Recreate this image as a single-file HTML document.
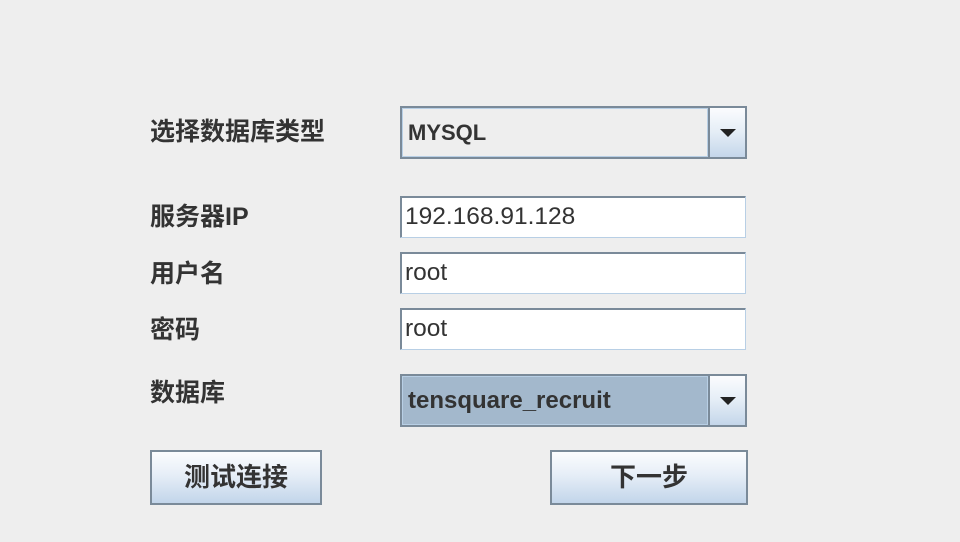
<!DOCTYPE html>
<html><head><meta charset="utf-8"><style>
body{margin:0;width:960px;height:542px;background:#eeeeee;position:relative;overflow:hidden;font-family:"Liberation Sans","Noto Sans CJK SC",sans-serif;}
.l{position:absolute;left:150px;font-size:25px;font-weight:bold;color:#333;line-height:28px;}
.tf{position:absolute;left:400px;background:#fff;border:1px solid #7a8a99;border-right-color:#b8cfe5;border-bottom-color:#b8cfe5;box-shadow:inset 1px 1px 0 #7a8a99;font-size:24.5px;color:#333;line-height:40px;padding-left:4px;box-sizing:border-box;width:346px;height:42px;}
.cb{position:absolute;left:400px;width:347px;height:53px;border:2px solid #7a8a99;box-sizing:border-box;}
.cb .t{position:absolute;left:0;top:0;width:306px;height:49px;border:1px solid #b8cfe5;box-sizing:border-box;font-size:22px;font-weight:bold;color:#333;line-height:47px;padding-left:5px;}
.cb .a{position:absolute;left:306px;top:0;width:35px;height:49px;border-left:2px solid #7a8a99;background:linear-gradient(#fbfcfe,#e4edf6 50%,#c4d6ea);}
.cb .a:after{content:"";position:absolute;left:10px;top:21px;border-left:8px solid transparent;border-right:8px solid transparent;border-top:8px solid #222;}
.b{position:absolute;top:450px;height:55px;border:2px solid #7a8a99;box-sizing:border-box;background:linear-gradient(#fbfcfe,#e6eef7 45%,#c2d5ea);font-size:26px;font-weight:bold;color:#333;text-align:center;line-height:51px;}
</style></head><body>
<div class="l" style="top:118px">选择数据库类型</div>
<div class="cb" style="top:106px"><div class="t" style="background:#eeeeee">MYSQL</div><div class="a"></div></div>
<div class="l" style="top:203px">服务器IP</div>
<div class="tf" style="top:196px">192.168.91.128</div>
<div class="l" style="top:260px">用户名</div>
<div class="tf" style="top:252px">root</div>
<div class="l" style="top:316px">密码</div>
<div class="tf" style="top:308px">root</div>
<div class="l" style="top:379px">数据库</div>
<div class="cb" style="top:374px"><div class="t" style="background:#a3b8cc;font-size:24px">tensquare_recruit</div><div class="a"></div></div>
<div class="b" style="left:150px;width:172px">测试连接</div>
<div class="b" style="left:550px;width:198px">下一步</div>
</body></html>
